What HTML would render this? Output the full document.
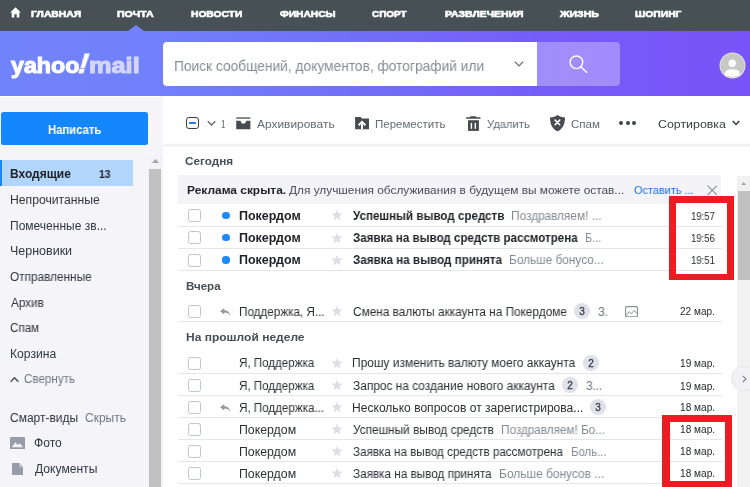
<!DOCTYPE html>
<html lang="ru"><head><meta charset="utf-8"><title>Yahoo Mail</title>
<style>
html,body{margin:0;padding:0}
body{width:750px;height:487px;overflow:hidden;position:relative;background:#fff;font-family:"Liberation Sans",sans-serif;}
.a{position:absolute}
.t{position:absolute;white-space:nowrap;line-height:16px;height:16px;transform-origin:0 50%;will-change:transform}
.t i{font-style:italic}
#nav{left:0;top:0;width:750px;height:31px;background:#465055}
#hdr{left:0;top:30.6px;width:750px;height:65.9px;background:linear-gradient(90deg,#7183fa 0%,#7180fa 21%,#7170f8 46%,#765cf8 73%,#7853f9 100%)}
#tri{left:128px;top:24.5px;width:0;height:0;border-left:8px solid transparent;border-right:8px solid transparent;border-bottom:6.5px solid #7181fa}
#sbox{left:163px;top:42.2px;width:374px;height:44.1px;background:#fff;border-radius:4px 0 0 4px}
#sbtn{left:537px;top:42.2px;width:83px;height:44.1px;background:rgba(255,255,255,.31);border-radius:0 4px 4px 0}
#side{left:0;top:96.5px;width:163px;height:391px;background:#f4f4f9}
#main{left:162.8px;top:96.5px;width:587px;height:391px;background:#fff}
#compose{left:1px;top:112.4px;width:146.8px;height:32.4px;background:#1587fc;border-radius:2.5px}
#sel{left:0;top:160px;width:132.5px;height:25.7px;background:#b2d5fb}
#selb{left:0;top:160px;width:2px;height:25.7px;background:#1e86f0}
#sstrack{left:149px;top:155px;width:13.5px;height:332px;background:#f3f3f7}
#ssthumb{left:149.2px;top:168.7px;width:11.6px;height:320px;background:#c1c1c2}
#tbshadow{left:163px;top:143px;width:587px;height:4px;background:linear-gradient(180deg,rgba(0,0,0,0) 0%,rgba(0,0,0,.07) 60%,rgba(0,0,0,.02) 100%)}
#banner{left:177.6px;top:175.2px;width:543.4px;height:28.5px;background:#f3f3f8}
.dv{position:absolute;left:177.6px;width:544px;height:1px;background:#e4e6eb}
.cb{position:absolute;left:188px;width:11px;height:11px;border:1px solid #c0c4cb;border-radius:2.5px;background:#fff}
.dot{position:absolute;left:222.4px;width:7.2px;height:7.2px;border-radius:50%;background:#1f8af5}
.star{position:absolute;left:331px;width:12px;height:12px}
.bdg{position:absolute;width:16.2px;height:16.2px;border-radius:50%;background:#dfe1eb;color:#3a4046;font-size:10px;font-weight:400;-webkit-text-stroke:.3px #3a4046;line-height:17.6px;text-align:center;will-change:transform}
.red{position:absolute;border:6.5px solid #ec1c24;box-sizing:border-box}
#mtrack{left:736.5px;top:175.5px;width:14px;height:312px;background:#f1f1f1}
#mthumb{left:738px;top:190.5px;width:12px;height:89.5px;background:#c1c1c1}
#exp{left:731px;top:365.5px;width:25.5px;height:25.5px;border-radius:50%;background:#f2f2f5;border:1px solid #e6e6ea;box-sizing:border-box}
</style></head><body>
<div class="a" id="nav"></div>
<div class="a" id="hdr"></div>
<div class="a" id="tri"></div>
<svg class="a" style="left:10px;top:7.2px" width="11" height="11" viewBox="0 0 11 11"><path d="M5.5 0.3 L0.2 5.4 H1.7 V10.6 H4.3 V7.2 H6.7 V10.6 H9.3 V5.4 H10.8 Z" fill="#fff"/></svg>
<div class="a" id="sbox"></div>
<div class="a" id="sbtn"></div>
<svg class="a" style="left:514px;top:60px" width="10" height="8" viewBox="0 0 10 8"><path d="M0.9 1.7 L5 5.9 L9.1 1.7" fill="none" stroke="#6b7178" stroke-width="1.25"/></svg>
<svg class="a" style="left:568px;top:54px" width="22" height="22" viewBox="0 0 22 22"><circle cx="8.4" cy="8.3" r="6.3" fill="none" stroke="#fff" stroke-width="1.4"/><path d="M13 13 L18.6 18.3" stroke="#fff" stroke-width="1.5" stroke-linecap="round"/></svg>
<svg class="a" style="left:719px;top:51.7px" width="27" height="27" viewBox="0 0 27 27"><circle cx="13.5" cy="13.5" r="13" fill="#e3e3e0"/><circle cx="13.5" cy="13.5" r="12.1" fill="#c7c7c5"/><circle cx="13.2" cy="11.3" r="3.7" fill="#fdfdfd"/><path d="M5.7 21.5 C5.7 18.8 9 17.3 13.3 17.3 C17.6 17.3 20.9 18.8 20.9 21.5 C20.9 23.8 17.6 24.8 13.3 24.8 C9 24.8 5.7 23.8 5.7 21.5 Z" fill="#fdfdfd"/></svg>

<div class="a" id="side"></div>
<div class="a" id="main"></div>
<div class="a" id="compose"></div>
<div class="a" id="sel"></div><div class="a" id="selb"></div>
<div class="a" id="sstrack"></div><div class="a" id="ssthumb"></div>
<svg class="a" style="left:152px;top:159px" width="7" height="4" viewBox="0 0 7 4"><path d="M0 4 L3.5 0 L7 4 Z" fill="#a3a3a3"/></svg>
<!-- collapse chevron -->
<svg class="a" style="left:10.3px;top:375.8px" width="9" height="7" viewBox="0 0 9 7"><path d="M0.6 5.8 L4.5 1.7 L8.4 5.8" fill="none" stroke="#4a5056" stroke-width="1.4"/></svg>
<!-- photo icon -->
<svg class="a" style="left:10.2px;top:436.5px" width="15" height="12.5" viewBox="0 0 15 12.5"><rect x="0" y="0" width="15" height="12.5" rx="1" fill="#979ca8"/><path d="M1.8 10.2 L5.3 5.2 L7.6 8 L9.6 6.3 L13.2 10.2 Z" fill="#f4f4f9"/></svg>
<!-- doc icon -->
<svg class="a" style="left:11.8px;top:462.5px" width="11.5" height="12.5" viewBox="0 0 11.5 12.5"><path d="M0 0 H7.2 L11.5 4.2 V12.5 H0 Z" fill="#979ca8"/><path d="M7.2 0 V4.2 H11.5 Z" fill="#c4c8cf"/></svg>

<div class="a" id="tbshadow"></div>
<!-- toolbar checkbox -->
<div class="a" style="left:186px;top:117px;width:10.8px;height:10px;border:1.3px solid #3a3f44;border-radius:3px"></div>
<div class="a" style="left:189.1px;top:122.4px;width:7.2px;height:1.8px;background:#2b7de0;border-radius:.5px"></div>
<svg class="a" style="left:207px;top:119.5px" width="9" height="7" viewBox="0 0 9 7"><path d="M0.8 1.3 L4.5 5 L8.2 1.3" fill="none" stroke="#5b636a" stroke-width="1.3"/></svg>
<!-- archive -->
<svg class="a" style="left:236px;top:117px" width="15" height="13" viewBox="0 0 15 13"><rect x="0.2" y="0.4" width="14.2" height="1.3" fill="#484c50"/><path d="M0.2 3.8 H4.3 L5.9 6.4 H8.9 L10.5 3.8 H14.4 V12.3 H0.2 Z" fill="#484c50"/></svg>
<!-- move -->
<svg class="a" style="left:355px;top:117px" width="15" height="13" viewBox="0 0 15 13"><path d="M0.1 0 H5.6 L7 1.6 H14 V12.3 H0.1 Z" fill="#484c50"/><path d="M3.6 8.2 L7 4.9 L10.4 8.2 M7 5.2 V12.3" fill="none" stroke="#fff" stroke-width="1.9"/></svg>
<!-- trash -->
<svg class="a" style="left:466.3px;top:115.5px" width="15" height="15" viewBox="0 0 15 15"><path d="M4.6 0.3 H9.6 L10.4 1.2 H14.5 V2.8 H0.1 V1.2 H3.8 Z" fill="#484c50"/><path d="M2 4.2 H12.9 V14.9 H2 Z" fill="#484c50"/><rect x="4.7" y="6.9" width="1.4" height="5.9" fill="#fff"/><rect x="8.6" y="6.9" width="1.4" height="5.9" fill="#fff"/></svg>
<!-- shield -->
<svg class="a" style="left:550px;top:115.3px" width="15" height="17" viewBox="0 0 15 17"><path d="M7.5 0 C9.5 1.6 12 2.3 15 2.4 C15 9.5 12.5 14 7.5 16.3 C2.5 14 0 9.5 0 2.4 C3 2.3 5.5 1.6 7.5 0 Z" fill="#484c50"/><path d="M5.1 5.1 L9.7 9.7 M9.7 5.1 L5.1 9.7" stroke="#fff" stroke-width="1.6" stroke-linecap="round"/></svg>
<!-- dots -->
<div class="a" style="left:619.2px;top:121.2px;width:3.9px;height:3.9px;border-radius:50%;background:#3f4549"></div>
<div class="a" style="left:625.8px;top:121.2px;width:3.9px;height:3.9px;border-radius:50%;background:#3f4549"></div>
<div class="a" style="left:632.4px;top:121.2px;width:3.9px;height:3.9px;border-radius:50%;background:#3f4549"></div>
<svg class="a" style="left:731.5px;top:119.5px" width="8" height="6" viewBox="0 0 8 6"><path d="M0.7 0.9 L4 4.4 L7.3 0.9" fill="none" stroke="#33383d" stroke-width="1.4"/></svg>

<div class="a" id="banner"></div>
<svg class="a" style="left:706.7px;top:184.8px" width="10.6" height="10.6" viewBox="0 0 10.6 10.6"><path d="M0.5 0.5 L10.1 10.1 M10.1 0.5 L0.5 10.1" stroke="#7d838b" stroke-width="1.05"/></svg>
<div class="cb" style="top:209.3px"></div>
<div class="dot" style="top:212.2px"></div>
<svg class="star" style="top:209.4px" viewBox="0 0 12 12"><path d="M6.00,0.40 L7.47,4.38 L11.71,4.55 L8.38,7.17 L9.53,11.25 L6.00,8.90 L2.47,11.25 L3.62,7.17 L0.29,4.55 L4.53,4.38Z" fill="#dcdee4"/></svg>
<div class="dv" style="top:225.6px"></div>
<div class="cb" style="top:231.4px"></div>
<div class="dot" style="top:234.3px"></div>
<svg class="star" style="top:231.5px" viewBox="0 0 12 12"><path d="M6.00,0.40 L7.47,4.38 L11.71,4.55 L8.38,7.17 L9.53,11.25 L6.00,8.90 L2.47,11.25 L3.62,7.17 L0.29,4.55 L4.53,4.38Z" fill="#dcdee4"/></svg>
<div class="dv" style="top:247.7px"></div>
<div class="cb" style="top:253.5px"></div>
<div class="dot" style="top:256.4px"></div>
<svg class="star" style="top:253.6px" viewBox="0 0 12 12"><path d="M6.00,0.40 L7.47,4.38 L11.71,4.55 L8.38,7.17 L9.53,11.25 L6.00,8.90 L2.47,11.25 L3.62,7.17 L0.29,4.55 L4.53,4.38Z" fill="#dcdee4"/></svg>
<div class="dv" style="top:269.8px"></div>
<div class="cb" style="top:304.8px"></div>
<svg class="a" style="left:219.9px;top:307.5px" width="10.6" height="8" viewBox="0 0 21 16"><path d="M8.5 0 L0 6.5 L8.5 13 V9 C13.5 9 17.5 10.5 20.5 15.5 C19.5 9 15.5 4.6 8.5 4 Z" fill="#989da4"/></svg>
<svg class="star" style="top:304.9px" viewBox="0 0 12 12"><path d="M6.00,0.40 L7.47,4.38 L11.71,4.55 L8.38,7.17 L9.53,11.25 L6.00,8.90 L2.47,11.25 L3.62,7.17 L0.29,4.55 L4.53,4.38Z" fill="#dcdee4"/></svg>
<div class="dv" style="top:321.1px"></div>
<div class="cb" style="top:356.6px"></div>
<svg class="star" style="top:356.7px" viewBox="0 0 12 12"><path d="M6.00,0.40 L7.47,4.38 L11.71,4.55 L8.38,7.17 L9.53,11.25 L6.00,8.90 L2.47,11.25 L3.62,7.17 L0.29,4.55 L4.53,4.38Z" fill="#dcdee4"/></svg>
<div class="dv" style="top:372.9px"></div>
<div class="cb" style="top:378.7px"></div>
<svg class="star" style="top:378.8px" viewBox="0 0 12 12"><path d="M6.00,0.40 L7.47,4.38 L11.71,4.55 L8.38,7.17 L9.53,11.25 L6.00,8.90 L2.47,11.25 L3.62,7.17 L0.29,4.55 L4.53,4.38Z" fill="#dcdee4"/></svg>
<div class="dv" style="top:395.0px"></div>
<div class="cb" style="top:400.8px"></div>
<svg class="a" style="left:219.9px;top:403.5px" width="10.6" height="8" viewBox="0 0 21 16"><path d="M8.5 0 L0 6.5 L8.5 13 V9 C13.5 9 17.5 10.5 20.5 15.5 C19.5 9 15.5 4.6 8.5 4 Z" fill="#989da4"/></svg>
<svg class="star" style="top:400.9px" viewBox="0 0 12 12"><path d="M6.00,0.40 L7.47,4.38 L11.71,4.55 L8.38,7.17 L9.53,11.25 L6.00,8.90 L2.47,11.25 L3.62,7.17 L0.29,4.55 L4.53,4.38Z" fill="#dcdee4"/></svg>
<div class="dv" style="top:417.1px"></div>
<div class="cb" style="top:422.9px"></div>
<svg class="star" style="top:423.0px" viewBox="0 0 12 12"><path d="M6.00,0.40 L7.47,4.38 L11.71,4.55 L8.38,7.17 L9.53,11.25 L6.00,8.90 L2.47,11.25 L3.62,7.17 L0.29,4.55 L4.53,4.38Z" fill="#dcdee4"/></svg>
<div class="dv" style="top:439.2px"></div>
<div class="cb" style="top:445.0px"></div>
<svg class="star" style="top:445.1px" viewBox="0 0 12 12"><path d="M6.00,0.40 L7.47,4.38 L11.71,4.55 L8.38,7.17 L9.53,11.25 L6.00,8.90 L2.47,11.25 L3.62,7.17 L0.29,4.55 L4.53,4.38Z" fill="#dcdee4"/></svg>
<div class="dv" style="top:461.3px"></div>
<div class="cb" style="top:467.1px"></div>
<svg class="star" style="top:467.2px" viewBox="0 0 12 12"><path d="M6.00,0.40 L7.47,4.38 L11.71,4.55 L8.38,7.17 L9.53,11.25 L6.00,8.90 L2.47,11.25 L3.62,7.17 L0.29,4.55 L4.53,4.38Z" fill="#dcdee4"/></svg>
<div class="dv" style="top:483.4px"></div>
<div class="bdg" style="left:574.0px;top:303.2px">3</div>
<div class="bdg" style="left:582.6px;top:354.9px">2</div>
<div class="bdg" style="left:561.9px;top:376.9px">2</div>
<div class="bdg" style="left:590.2px;top:399.2px">3</div>
<svg class="a" style="left:624.8px;top:305.5px" width="13" height="11.5" viewBox="0 0 26 23"><rect x="1.2" y="1.2" width="23.6" height="20.6" rx="2" fill="none" stroke="#8a8f97" stroke-width="2.2"/><path d="M2.5 19 L8.5 11 L12.5 15.5 L18.5 8.5 L23.5 15" fill="none" stroke="#8a8f97" stroke-width="2"/></svg>
<div class="a" id="mtrack"></div><div class="a" id="mthumb"></div>
<svg class="a" style="left:741.3px;top:181.5px" width="5.4" height="3.6" viewBox="0 0 6 4"><path d="M0 4 L3 0 L6 4 Z" fill="#a3a3a3"/></svg>
<div class="a" id="exp"></div>
<svg class="a" style="left:741.5px;top:374.5px" width="5" height="8" viewBox="0 0 5 8"><path d="M0.8 0.8 L4 4 L0.8 7.2" fill="none" stroke="#7b828a" stroke-width="1.1"/></svg>
<span class="a" id="bang" style="left:79px;top:47.5px;font-size:28px;line-height:32px;font-weight:700;font-style:italic;color:#fff;-webkit-text-stroke:1px #fff;transform:skewX(-7deg);will-change:transform">!</span>
<span class="t" id="t0" style="left:30.89px;top:6.00px;font-size:9.8px;font-weight:700;color:#fff;transform:translateY(-0.4px) scale(1.0572,1);-webkit-text-stroke:0.65px #fff;">ГЛАВНАЯ</span>
<span class="t" id="t1" style="left:116.89px;top:6.00px;font-size:9.8px;font-weight:700;color:#fff;transform:translateY(-0.4px) scale(1.0812,1);-webkit-text-stroke:0.65px #fff;">ПОЧТА</span>
<span class="t" id="t2" style="left:190.90px;top:6.00px;font-size:9.8px;font-weight:700;color:#fff;transform:translateY(-0.4px) scale(1.0456,1);-webkit-text-stroke:0.65px #fff;">НОВОСТИ</span>
<span class="t" id="t3" style="left:279.51px;top:6.00px;font-size:9.8px;font-weight:700;color:#fff;transform:translateY(-0.4px) scale(1.0427,1);-webkit-text-stroke:0.65px #fff;">ФИНАНСЫ</span>
<span class="t" id="t4" style="left:372.40px;top:6.00px;font-size:9.8px;font-weight:700;color:#fff;transform:translateY(-0.4px) scale(1.0101,1);-webkit-text-stroke:0.65px #fff;">СПОРТ</span>
<span class="t" id="t5" style="left:444.89px;top:6.00px;font-size:9.8px;font-weight:700;color:#fff;transform:translateY(-0.4px) scale(1.0656,1);-webkit-text-stroke:0.65px #fff;">РАЗВЛЕЧЕНИЯ</span>
<span class="t" id="t6" style="left:559.95px;top:6.00px;font-size:9.8px;font-weight:700;color:#fff;transform:translateY(-0.4px) scale(1.0754,1);-webkit-text-stroke:0.65px #fff;">ЖИЗНЬ</span>
<span class="t" id="t7" style="left:634.89px;top:6.00px;font-size:9.8px;font-weight:700;color:#fff;transform:translateY(-0.4px) scale(1.0510,1);-webkit-text-stroke:0.65px #fff;">ШОПИНГ</span>
<span class="t" id="t8" style="left:11.01px;top:58.00px;font-size:22.5px;font-weight:700;color:#fff;transform:scaleX(1.0314);-webkit-text-stroke:1.1px #fff;">yahoo</span>
<span class="t" id="t9" style="left:88.79px;top:58.00px;font-size:22.5px;font-weight:700;color:#d3d6fc;transform:scaleX(1.1261);-webkit-text-stroke:1.1px #d3d6fc;">mail</span>
<span class="t" id="t10" style="left:173.90px;top:58.00px;font-size:15px;font-weight:400;color:#878c94;transform:scaleX(0.9165);">Поиск сообщений, документов, фотографий или</span>
<span class="t" id="t11" style="left:48.15px;top:122.00px;font-size:12px;font-weight:700;color:#fff;transform:scaleX(0.9398);">Написать</span>
<span class="t" id="t12" style="left:9.80px;top:166.00px;font-size:12px;font-weight:700;color:#1d2228;transform:scaleX(1.0004);">Входящие</span>
<span class="t" id="t13" style="left:99.23px;top:166.00px;font-size:11px;font-weight:700;color:#1d2228;transform:scaleX(0.9454);">13</span>
<span class="t" id="t14" style="left:9.79px;top:192.00px;font-size:12px;font-weight:400;color:#32383f;transform:scaleX(1.0150);">Непрочитанные</span>
<span class="t" id="t15" style="left:9.80px;top:218.00px;font-size:12px;font-weight:400;color:#32383f;transform:scaleX(1.0013);">Помеченные зв...</span>
<span class="t" id="t16" style="left:9.76px;top:243.00px;font-size:12px;font-weight:400;color:#32383f;transform:scaleX(1.0401);">Черновики</span>
<span class="t" id="t17" style="left:10.21px;top:269.00px;font-size:12px;font-weight:400;color:#32383f;transform:scaleX(0.9838);">Отправленные</span>
<span class="t" id="t18" style="left:10.70px;top:295.00px;font-size:12px;font-weight:400;color:#32383f;transform:scaleX(0.9775);">Архив</span>
<span class="t" id="t19" style="left:10.12px;top:320.00px;font-size:12px;font-weight:400;color:#32383f;transform:scaleX(0.9674);">Спам</span>
<span class="t" id="t20" style="left:9.79px;top:346.00px;font-size:12px;font-weight:400;color:#32383f;transform:scaleX(1.0104);">Корзина</span>
<span class="t" id="t21" style="left:23.92px;top:371.00px;font-size:12px;font-weight:400;color:#727981;transform:scaleX(0.9675);">Свернуть</span>
<span class="t" id="t22" style="left:10.10px;top:410.00px;font-size:12px;font-weight:400;color:#32383f;transform:scaleX(0.9944);">Смарт-виды</span>
<span class="t" id="t23" style="left:85.11px;top:410.00px;font-size:12px;font-weight:400;color:#727981;transform:scaleX(0.9897);">Скрыть</span>
<span class="t" id="t24" style="left:33.90px;top:435.00px;font-size:12px;font-weight:400;color:#32383f;transform:scaleX(1.0078);">Фото</span>
<span class="t" id="t25" style="left:34.50px;top:461.00px;font-size:12px;font-weight:400;color:#32383f;transform:scaleX(1.0077);">Документы</span>
<span class="t" id="t26" style="left:221.25px;top:116.00px;font-size:11.5px;font-weight:400;color:#646b73;transform:scaleX(0.6863);">1</span>
<span class="t" id="t27" style="left:256.80px;top:116.00px;font-size:11.5px;font-weight:400;color:#646b73;transform:scaleX(1.0373);">Архивировать</span>
<span class="t" id="t28" style="left:375.10px;top:116.00px;font-size:11.5px;font-weight:400;color:#646b73;transform:scaleX(0.9976);">Переместить</span>
<span class="t" id="t29" style="left:486.91px;top:116.00px;font-size:11.5px;font-weight:400;color:#646b73;transform:scaleX(0.9719);">Удалить</span>
<span class="t" id="t30" style="left:570.50px;top:116.00px;font-size:11.5px;font-weight:400;color:#646b73;transform:scaleX(1.0062);">Спам</span>
<span class="t" id="t31" style="left:658.06px;top:116.00px;font-size:11.5px;font-weight:400;color:#3a4046;transform:scaleX(1.0763);">Сортировка</span>
<span class="t" id="t32" style="left:184.79px;top:153.00px;font-size:11.5px;font-weight:700;color:#464e56;transform:scaleX(1.0205);">Сегодня</span>
<span class="t" id="t33" style="left:185.80px;top:278.00px;font-size:11.5px;font-weight:700;color:#464e56;transform:scaleX(1.0070);">Вчера</span>
<span class="t" id="t34" style="left:185.57px;top:329.00px;font-size:11.5px;font-weight:700;color:#464e56;transform:scaleX(1.0443);">На прошлой неделе</span>
<span class="t" id="t35" style="left:187.07px;top:182.00px;font-size:11.5px;font-weight:700;color:#1d2228;transform:scaleX(1.0377);">Реклама скрыта.</span>
<span class="t" id="t36" style="left:289.20px;top:182.00px;font-size:11.5px;font-weight:400;color:#464e56;transform:scaleX(1.0301);">Для улучшения обслуживания в будущем вы можете остав...</span>
<span class="t" id="t37" style="left:633.92px;top:182.00px;font-size:11.5px;font-weight:400;color:#1a73d9;transform:scaleX(0.9510);">Оставить ...</span>
<span class="t" id="t38" style="left:238.77px;top:208.00px;font-size:12px;font-weight:700;color:#1d2228;transform:scaleX(1.0406);">Покердом</span>
<span class="t" id="t39" style="left:353.20px;top:208.00px;font-size:12px;font-weight:700;color:#1d2228;transform:scaleX(0.9669);">Успешный вывод средств</span>
<span class="t" id="t40" style="left:510.91px;top:208.00px;font-size:12px;font-weight:400;color:#828a93;transform:scaleX(0.9843);">Поздравляем! ...</span>
<span class="t" id="t41" style="left:690.53px;top:209.00px;font-size:10px;font-weight:400;color:#26282a;transform:scaleX(0.9513);">19:57</span>
<span class="t" id="t42" style="left:238.77px;top:230.00px;font-size:12px;font-weight:700;color:#1d2228;transform:scaleX(1.0406);">Покердом</span>
<span class="t" id="t43" style="left:353.01px;top:230.00px;font-size:12px;font-weight:700;color:#1d2228;transform:scaleX(0.9634);">Заявка на вывод средств рассмотрена</span>
<span class="t" id="t44" style="left:585.19px;top:230.00px;font-size:12px;font-weight:400;color:#828a93;transform:scaleX(0.9032);">Б...</span>
<span class="t" id="t45" style="left:690.54px;top:231.00px;font-size:10px;font-weight:400;color:#26282a;transform:scaleX(0.9473);">19:56</span>
<span class="t" id="t46" style="left:238.77px;top:252.00px;font-size:12px;font-weight:700;color:#1d2228;transform:scaleX(1.0406);">Покердом</span>
<span class="t" id="t47" style="left:353.01px;top:252.00px;font-size:12px;font-weight:700;color:#1d2228;transform:scaleX(0.9701);">Заявка на вывод принята</span>
<span class="t" id="t48" style="left:509.11px;top:252.00px;font-size:12px;font-weight:400;color:#828a93;transform:scaleX(0.9863);">Больше бонусо...</span>
<span class="t" id="t49" style="left:690.53px;top:253.00px;font-size:10px;font-weight:400;color:#26282a;transform:scaleX(0.9513);">19:51</span>
<span class="t" id="t50" style="left:238.72px;top:304.00px;font-size:12px;font-weight:400;color:#2b3035;transform:scaleX(0.9732);">Поддержка, Я...</span>
<span class="t" id="t51" style="left:352.61px;top:304.00px;font-size:12px;font-weight:400;color:#2b3035;transform:scaleX(0.9846);">Смена валюты аккаунта на Покердоме</span>
<span class="t" id="t52" style="left:598.32px;top:304.00px;font-size:12px;font-weight:400;color:#676e76;transform:scaleX(0.9299);">З.</span>
<span class="t" id="t53" style="left:680.00px;top:304.00px;font-size:10px;font-weight:400;color:#26282a;transform:scaleX(1.0060);">22 мар.</span>
<span class="t" id="t54" style="left:239.12px;top:355.00px;font-size:12px;font-weight:400;color:#2b3035;transform:scaleX(0.9656);">Я, Поддержка</span>
<span class="t" id="t55" style="left:352.31px;top:355.00px;font-size:12px;font-weight:400;color:#2b3035;transform:scaleX(0.9943);">Прошу изменить валюту моего аккаунта</span>
<span class="t" id="t56" style="left:679.79px;top:356.00px;font-size:10px;font-weight:400;color:#26282a;transform:scaleX(1.0121);">19 мар.</span>
<span class="t" id="t57" style="left:239.12px;top:378.00px;font-size:12px;font-weight:400;color:#2b3035;transform:scaleX(0.9656);">Я, Поддержка</span>
<span class="t" id="t58" style="left:352.90px;top:378.00px;font-size:12px;font-weight:400;color:#2b3035;transform:scaleX(0.9908);">Запрос на создание нового аккаунта</span>
<span class="t" id="t59" style="left:586.12px;top:378.00px;font-size:12px;font-weight:400;color:#676e76;transform:scaleX(0.9173);">З...</span>
<span class="t" id="t60" style="left:679.79px;top:379.00px;font-size:10px;font-weight:400;color:#26282a;transform:scaleX(1.0121);">19 мар.</span>
<span class="t" id="t61" style="left:239.12px;top:400.00px;font-size:12px;font-weight:400;color:#2b3035;transform:scaleX(0.9687);">Я, Поддержка...</span>
<span class="t" id="t62" style="left:352.29px;top:400.00px;font-size:12px;font-weight:400;color:#2b3035;transform:scaleX(1.0057);">Несколько вопросов от зарегистрирова...</span>
<span class="t" id="t63" style="left:679.79px;top:400.00px;font-size:10px;font-weight:400;color:#26282a;transform:scaleX(1.0121);">18 мар.</span>
<span class="t" id="t64" style="left:238.68px;top:422.00px;font-size:12px;font-weight:400;color:#2b3035;transform:scaleX(1.0253);">Покердом</span>
<span class="t" id="t65" style="left:352.90px;top:422.00px;font-size:12px;font-weight:400;color:#2b3035;transform:scaleX(0.9861);">Успешный вывод средств</span>
<span class="t" id="t66" style="left:501.12px;top:422.00px;font-size:12px;font-weight:400;color:#828a93;transform:scaleX(0.9765);">Поздравляем! Бо...</span>
<span class="t" id="t67" style="left:679.79px;top:422.00px;font-size:10px;font-weight:400;color:#26282a;transform:scaleX(1.0121);">18 мар.</span>
<span class="t" id="t68" style="left:238.68px;top:444.00px;font-size:12px;font-weight:400;color:#2b3035;transform:scaleX(1.0253);">Покердом</span>
<span class="t" id="t69" style="left:352.91px;top:444.00px;font-size:12px;font-weight:400;color:#2b3035;transform:scaleX(0.9699);">Заявка на вывод средств рассмотрена</span>
<span class="t" id="t70" style="left:570.85px;top:444.00px;font-size:12px;font-weight:400;color:#828a93;transform:scaleX(0.9464);">Боль...</span>
<span class="t" id="t71" style="left:679.79px;top:444.00px;font-size:10px;font-weight:400;color:#26282a;transform:scaleX(1.0121);">18 мар.</span>
<span class="t" id="t72" style="left:238.68px;top:466.00px;font-size:12px;font-weight:400;color:#2b3035;transform:scaleX(1.0253);">Покердом</span>
<span class="t" id="t73" style="left:352.91px;top:466.00px;font-size:12px;font-weight:400;color:#2b3035;transform:scaleX(0.9760);">Заявка на вывод принята</span>
<span class="t" id="t74" style="left:498.70px;top:466.00px;font-size:12px;font-weight:400;color:#828a93;transform:scaleX(0.9952);">Больше бонусов ...</span>
<span class="t" id="t75" style="left:679.79px;top:466.00px;font-size:10px;font-weight:400;color:#26282a;transform:scaleX(1.0121);">18 мар.</span>
<div class="red" style="left:669px;top:196px;width:65px;height:84px;border-width:7px 7px 6px 7px"></div>
<div class="red" style="left:662px;top:415px;width:70px;height:73px;border-width:7px 7px 7px 8px"></div>
</body></html>
